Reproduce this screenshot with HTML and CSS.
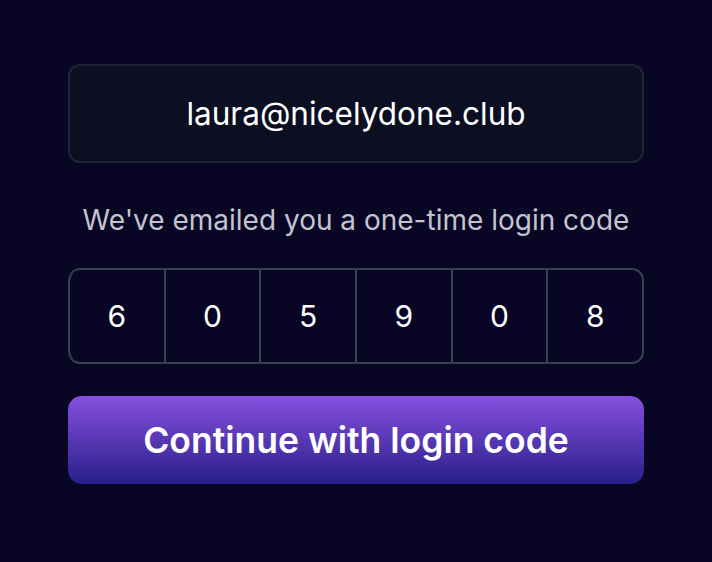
FILE: index.html
```html
<!DOCTYPE html>
<html lang="en">
<head>
    <meta charset="UTF-8">
    <meta name="viewport" content="width=device-width, initial-scale=1.0">
    <title>Login code</title>
    <link rel="stylesheet" href="styles.css">
</head>
<body>
    <div class="login">
        <div class="email">laura@nicelydone.club</div>

        <p class="hint">We've emailed you a one-time login code</p>

        <div class="code">
            <div class="digit">6</div>
            <div class="digit">0</div>
            <div class="digit">5</div>
            <div class="digit">9</div>
            <div class="digit">0</div>
            <div class="digit">8</div>
        </div>

        <button class="continue">Continue with login code</button>
    </div>
</body>
</html>
```

FILE: styles.css
```css
body {
    font-family: 'Inter', 'Noto Sans', sans-serif;
    background-color: #080624;
    margin: 0;
    height: 100vh;
}

.login {
    width: 576px;
    margin: 0 auto;
    padding-top: 64px;
    display: flex;
    flex-direction: column;
}

.email {
    height: 95px;
    display: flex;
    align-items: center;
    justify-content: center;
    background-color: #0c0f22;
    border: 2px solid #1d2435;
    border-radius: 12px;
    color: #ffffff;
    font-size: 31.5px;
}

.hint {
    margin: 40px 0 0;
    text-align: center;
    color: #c3c4cf;
    font-size: 28px;
    line-height: 34px;
}

.code {
    margin-top: 31px;
    height: 92px;
    display: grid;
    grid-template-columns: repeat(6, 1fr);
    border: 2px solid #3a4152;
    border-left: none;
    border-radius: 12px;
    overflow: hidden;
}

.digit {
    display: flex;
    align-items: center;
    justify-content: center;
    color: #ffffff;
    font-size: 30px;
    border-left: 2px solid #3a4152;
}

.digit:first-child {
    border-radius: 12px 0 0 12px;
}

.continue {
    margin-top: 32px;
    height: 88px;
    border: none;
    border-radius: 14px;
    background: linear-gradient(to bottom, #8750e0, #281f88);
    color: #ffffff;
    font-family: inherit;
    font-size: 35.5px;
    font-weight: 600;
    cursor: pointer;
}
```
